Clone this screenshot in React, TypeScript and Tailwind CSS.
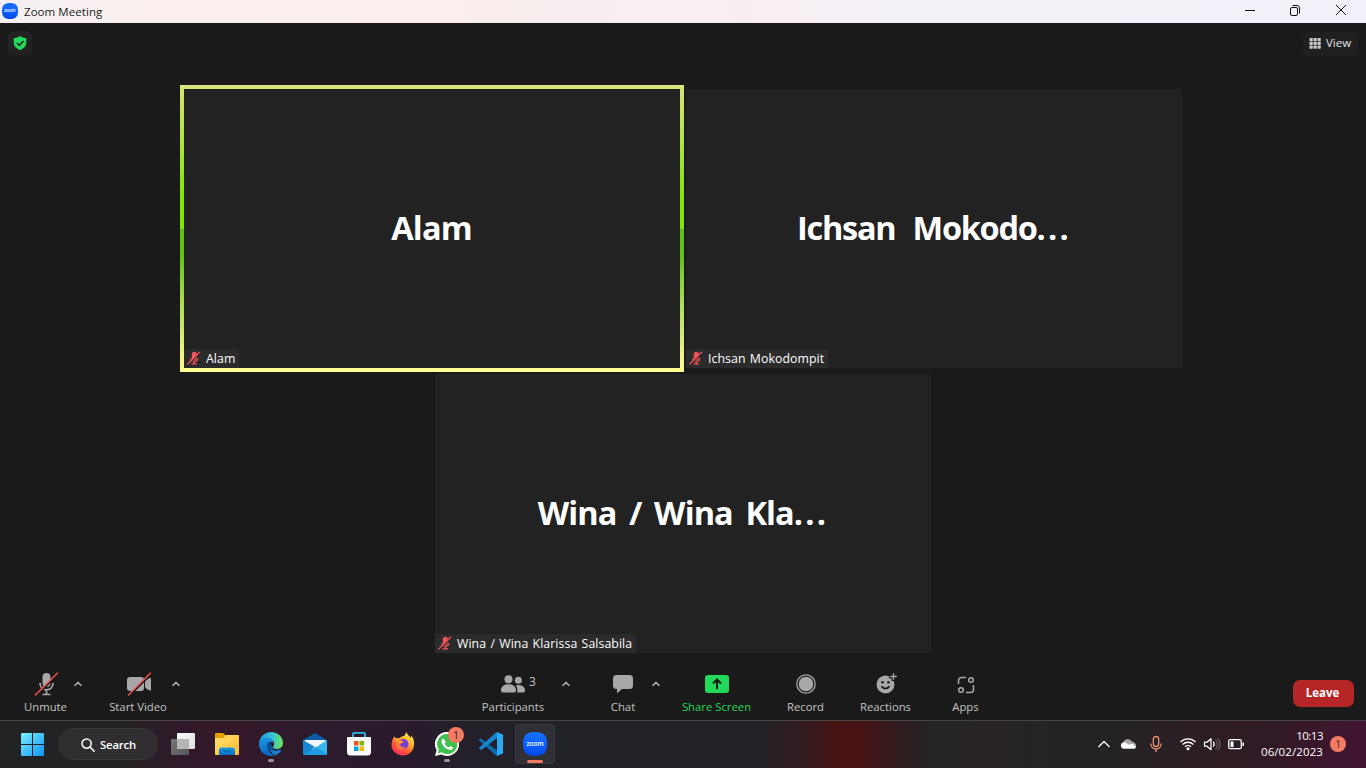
import type { ReactNode } from 'react';

const ui = "font-['Open_Sans','Noto_Sans',sans-serif]";

function ZoomLogo({ size, id }: { size: number; id: string }) {
  return (
    <svg width={size} height={size} viewBox="0 0 24 24" className="block">
      <defs>
        <linearGradient id={id} x1="0" y1="0" x2="0" y2="1">
          <stop offset="0" stopColor="#1673ff" />
          <stop offset="0.6" stopColor="#0b5cff" />
          <stop offset="1" stopColor="#0047e0" />
        </linearGradient>
      </defs>
      <path d="M12 0C20.5 0 24 3.5 24 12s-3.500 12-12 12S0 20.500 0 12 3.500 0 12 0z" fill={`url(#${id})`} />
      <text x="12" y="13.800" textAnchor="middle" fill="#fff" fontFamily="Open Sans" fontWeight="600" fontSize="6.800" textLength="17" lengthAdjust="spacingAndGlyphs">zoom</text>
    </svg>
  );
}

function TitleBar() {
  return (
    <header className="flex h-[23px] items-center bg-[linear-gradient(90deg,#f5eff3_0%,#faf0ee_10%,#fbf0ed_22%,#f9eeee_38%,#f9eef1_52%,#f4f0f8_66%,#f2f1f9_100%)] pb-px pl-0.5">
      <ZoomLogo size={16} id="title-zoom" />
      <span className="ml-1.5 pt-px text-[11.500px] leading-none tracking-[0.060px] text-[#1a1a1a]">Zoom Meeting</span>
      <svg width="112" height="20" viewBox="0 0 112 20" className="ml-auto mr-[14px]" fill="none" stroke="#111" strokeWidth="1">
        <path d="M5 9.500h10" />
        <rect x="50.500" y="6.500" width="7" height="8" rx="1.500" />
        <path d="M52.500 4.500h4.500a2.500 2.500 0 0 1 2.500 2.500v5.500" />
        <path d="M96 4l10 10M106 4L96 14" />
      </svg>
    </header>
  );
}

function MutedMic() {
  return (
    <svg width="14" height="14" viewBox="0 0 14 14" fill="none" className="-mt-px">
      <rect x="4.800" y="0.800" width="5" height="8.500" rx="2.400" fill="#f2545b" />
      <path d="M3.800 7c0 4.500 7 4.500 7 0M7.300 10.500v2.500M4.500 12.800h5.500" stroke="#f2545b" strokeWidth="1.200" />
      <path d="M1.700 13.500L13.500 1.700" stroke="#282828" strokeWidth="1.100" />
      <path d="M0.500 13.300L13 0.800" stroke="#f2545b" strokeWidth="1.300" />
    </svg>
  );
}

function Tile({ title, label, titleClass, labelClass, truncated }: { title: string; label: string; titleClass: string; labelClass: string; truncated?: boolean }) {
  return (
    <div className="flex h-[279px] w-[496px] flex-col bg-[#222222]">
      <div className="flex h-[260px] items-center justify-center pt-[18px]">
        <span className={`whitespace-pre text-[32.500px] font-bold leading-[40px] text-white ${titleClass}`}>
          {title}
          {truncated && <span className="tracking-[2.200px]">...</span>}
        </span>
      </div>
      <div className={`flex h-[19px] items-center bg-[#2b2b2b] pl-[3px] ${labelClass}`}>
        <MutedMic />
        <span className="ml-[5px] whitespace-pre text-[12.300px] leading-[19px] tracking-[0.070px] text-white [word-spacing:1px]">{label}</span>
      </div>
    </div>
  );
}

function Caret() {
  return (
    <svg width="12" height="8" viewBox="0 0 12 8" fill="none" className="mt-[16px] shrink-0">
      <path d="M2.500 5.800L6 2.600l3.500 3.200" stroke="#b5b5b5" strokeWidth="1.500" />
    </svg>
  );
}

function Tool({ label, width, text = 'text-[#c4c4c4]', children }: { label: string; width: string; text?: string; children: ReactNode }) {
  return (
    <button className={`flex h-full shrink-0 flex-col items-center ${width}`}>
      <span className="mt-[7px] flex h-[26px] items-center justify-center">{children}</span>
      <span className={`mt-[1px] whitespace-nowrap text-[11.300px] leading-[18px] font-medium ${text}`}>{label}</span>
    </button>
  );
}

function Toolbar() {
  return (
    <div className="flex h-[56px] pl-[19px]">
      <Tool label="Unmute" width="w-[53px]">
        <svg width="26" height="26" viewBox="0 0 26 26" fill="none">
          <rect x="9.500" y="2" width="8" height="14" rx="4" fill="#a8a8a8" />
          <path d="M7 12c0 9 13 9 13 0M13.500 18.500v5M9.500 23.500h8" stroke="#a8a8a8" strokeWidth="1.700" />
          <path d="M3.500 24.500L26 2" stroke="#1a1a1a" strokeWidth="2" />
          <path d="M2 24.500L24.800 1.700" stroke="#f2524e" strokeWidth="1.500" />
        </svg>
      </Tool>
      <Caret />
      <Tool label="Start Video" width="ml-[22px] w-[64px]">
        <svg width="26" height="26" viewBox="0 0 26 26" fill="none" className="ml-[2px]">
          <rect x="1" y="6" width="17" height="14" rx="3" fill="#a8a8a8" />
          <path d="M19 10.500c1.500-2 3.500-3.500 6-3.500v12.500c-2.500 0-4.500-1.500-6-3.500z" fill="#a8a8a8" />
          <path d="M3.500 24.500L26 2" stroke="#1a1a1a" strokeWidth="2" />
          <path d="M2 24.500L24.800 1.700" stroke="#f2524e" strokeWidth="1.500" />
        </svg>
      </Tool>
      <Caret />
      <Tool label="Participants" width="ml-[284px] w-[94px]">
        <span className="flex items-start pl-[11px]">
          <svg width="24" height="20" viewBox="0 0 24 20" fill="#a8a8a8">
            <circle cx="7.500" cy="5.200" r="4" />
            <circle cx="17.400" cy="6.300" r="3.500" />
            <path d="M0 16c0-7.600 15-7.600 15 0 0 2-1 2.500-2.500 2.500h-10C1 18.500 0 18 0 16z" />
            <path d="M15 11.300c4-1 9 .7 9 4.900 0 1.800-.7 2.300-2 2.300h-6c.8-2.200.3-4.800-1-7.200z" />
          </svg>
          <span className="ml-[4px] text-[12px] leading-[15px] text-[#c4c4c4]">3</span>
        </span>
      </Tool>
      <Caret />
      <Tool label="Chat" width="ml-[24px] w-[54px]">
        <svg width="20" height="20" viewBox="0 0 20 20" fill="#a8a8a8">
          <path d="M3.500 1h13A3.500 3.500 0 0 1 20 4.500v7a3.500 3.500 0 0 1-3.500 3.500H9l-5 4.200V15h-.5A3.500 3.500 0 0 1 0 11.500v-7A3.500 3.500 0 0 1 3.500 1z" />
        </svg>
      </Tool>
      <Caret />
      <Tool label="Share Screen" width="ml-[10px] w-[89px]" text="text-[#23d959]">
        <svg width="24" height="18" viewBox="0 0 24 18" fill="none">
          <rect width="24" height="18" rx="3" fill="#23d959" />
          <path d="M12 14V5M8 8.500l4-4 4 4" stroke="#1a1a1a" strokeWidth="2" />
        </svg>
      </Tool>
      <Tool label="Record" width="w-[89px]">
        <svg width="20" height="20" viewBox="0 0 20 20" fill="none">
          <circle cx="10" cy="10" r="9.200" stroke="#a8a8a8" strokeWidth="1.300" />
          <circle cx="10" cy="10" r="7.300" fill="#a8a8a8" />
        </svg>
      </Tool>
      <Tool label="Reactions" width="w-[71px]">
        <svg width="24" height="24" viewBox="0 0 24 24" fill="none" className="ml-[2px]">
          <circle cx="10.500" cy="12.500" r="9" fill="#a8a8a8" />
          <circle cx="7.500" cy="10.300" r="1.300" fill="#1a1a1a" />
          <circle cx="13.500" cy="10.300" r="1.300" fill="#1a1a1a" />
          <path d="M6.500 14.200c1.500 3 6.500 3 8 0" stroke="#1a1a1a" strokeWidth="1.600" />
          <path d="M18.500 0v9M14 4.500h9" stroke="#1a1a1a" strokeWidth="4" />
          <path d="M18.500 1.200v6.600M15.200 4.500h6.600" stroke="#a8a8a8" strokeWidth="1.300" />
        </svg>
      </Tool>
      <Tool label="Apps" width="w-[89px]">
        <svg width="18" height="18" viewBox="0 0 18 18" fill="none" stroke="#a8a8a8" strokeWidth="1.500" className="mt-[2px]">
          <path d="M1.500 8V4.500a3 3 0 0 1 3-3H9M16.500 9v4.500a3 3 0 0 1-3 3H9" />
          <circle cx="14" cy="4" r="2.300" />
          <circle cx="4" cy="14" r="2.300" />
        </svg>
      </Tool>
      <button className="ml-[283px] mt-[16px] h-[27px] w-[61px] rounded-[7px] bg-[#b72626] pb-px pr-[2px] text-[11.500px] font-bold leading-none text-white">Leave</button>
    </div>
  );
}

function TaskCell({ children, dot }: { children: ReactNode; dot?: boolean }) {
  return (
    <div className="relative flex h-full w-[44px] items-center justify-center">
      {children}
      {dot && <i className="absolute bottom-[5px] left-[19px] h-[3px] w-[6px] rounded-full bg-[#9b9499]" />}
    </div>
  );
}

function Taskbar() {
  return (
    <footer className="flex h-[48px] items-center border-t border-[#444446] bg-[linear-gradient(90deg,#202224_0px,#242224_130px,#30192a_180px,#35192a_240px,#2b1b2b_310px,#2a1a2d_400px,#241f29_460px,#212228_560px,#222327_760px,#341a1e_805px,#4a1313_840px,#451415_865px,#321b1d_895px,#242325_930px,#282226_990px,#212324_1080px,#2a1f24_1180px,#301a25_1270px,#431431_1366px)] pb-px pl-[21px]">
      <svg width="23" height="23" viewBox="0 0 23 23">
        <defs>
          <linearGradient id="win" x1="0" y1="0" x2="1" y2="1">
            <stop offset="0" stopColor="#7af0ff" />
            <stop offset="1" stopColor="#0f94f5" />
          </linearGradient>
        </defs>
        <path d="M1 0h10v11H0V1a1 1 0 0 1 1-1zM12 0h10a1 1 0 0 1 1 1v10H12zM0 12h11v11H1a1 1 0 0 1-1-1zM12 12h11v10a1 1 0 0 1-1 1H12z" fill="url(#win)" />
      </svg>
      <div className="ml-[14px] flex h-8 w-[100px] items-center rounded-full border border-[#3a373b] bg-[#302e31] pl-[22px] pt-px">
        <svg width="14" height="14" viewBox="0 0 15 15" fill="none" stroke="#f4f4f4" strokeWidth="1.700">
          <circle cx="6" cy="6" r="4.900" />
          <path d="M9.700 9.700l4.300 4.300" strokeLinecap="round" />
        </svg>
        <span className="ml-[5px] text-[11.300px] font-semibold leading-none tracking-[-0.150px] text-white">Search</span>
      </div>
      <div className="ml-[3px] flex h-full">
        <TaskCell>
          <svg width="24" height="22" viewBox="0 0 24 22">
            <defs>
              <linearGradient id="tv" x1="0" y1="0" x2="1" y2="1"><stop offset="0" stopColor="#fff" /><stop offset="1" stopColor="#dcdcdc" /></linearGradient>
              <linearGradient id="tvb" x1="0" y1="0" x2="1" y2="1"><stop offset="0" stopColor="#777" /><stop offset="1" stopColor="#555" /></linearGradient>
            </defs>
            <rect y="6" width="18" height="16" rx="1" fill="url(#tvb)" />
            <rect x="6" width="18" height="16" rx="1" fill="url(#tv)" />
            <path d="M6 6h12v10H6z" fill="#b5b5b5" />
          </svg>
        </TaskCell>
        <TaskCell>
          <svg width="24" height="22" viewBox="0 0 24 22">
            <defs>
              <linearGradient id="fo" x1="0" y1="0" x2="1" y2="1"><stop offset="0" stopColor="#ffe07a" /><stop offset="1" stopColor="#fdbd23" /></linearGradient>
              <linearGradient id="fb" x1="0" y1="0" x2="0" y2="1"><stop offset="0" stopColor="#1b9be8" /><stop offset="1" stopColor="#0670c0" /></linearGradient>
            </defs>
            <path d="M0 1.200C0 .5.500 0 1.200 0h7l2 2H23a1 1 0 0 1 1 1v5H0z" fill="#e7a000" />
            <path d="M0 5h8.500l2.500-3h12a1 1 0 0 1 1 1v18a1 1 0 0 1-1 1H1a1 1 0 0 1-1-1z" fill="url(#fo)" />
            <path d="M4 22v-5a2.500 2.500 0 0 1 2.500-2.500h11A2.500 2.500 0 0 1 20 17v5z" fill="url(#fb)" />
            <path d="M8 18h8" stroke="#075a9c" />
          </svg>
        </TaskCell>
        <TaskCell dot>
          <svg width="24" height="24" viewBox="0 0 24 24">
            <defs>
              <linearGradient id="ea" x1="0" y1="0.300" x2="1" y2="0.400"><stop offset="0" stopColor="#2299dc" /><stop offset="0.550" stopColor="#35c4d8" /><stop offset="1" stopColor="#6be05a" /></linearGradient>
              <linearGradient id="eb" x1="0" y1="0" x2="0.300" y2="1"><stop offset="0" stopColor="#1a9be6" /><stop offset="1" stopColor="#0b66c2" /></linearGradient>
            </defs>
            <path d="M0 11.500C.5 5 5.500 0 12 0c7 0 12 5 12 11 0 4-3 6-6.500 6-3 0-4.300-1.300-3-2.900 1.800-2.600.3-6.600-4.500-7.100C5 6.500 1 8.500 0 11.500z" fill="url(#ea)" />
            <path d="M0 12c.5-4 4-6.500 8.500-6.200 3.500.2 6 2.500 6 5.200-3-2.500-6.500 0-6 4 .5 4.500 4 7.500 8 8C8 26.500 0 20 0 12z" fill="url(#eb)" />
            <path d="M9.500 10c-2.500 2.500-1.500 7 2 9.500 3.500 2.300 8 1.500 10.500-1.200.5-.6.200-1.100-.5-.8-4 1.600-8.500.5-8-3.500-2 0-1-4-4-4z" fill="#0c4f96" />
            <path d="M16.500 23c2.500-.8 4.300-2.300 5.500-4.200.3-.6-.1-1-.7-.7-4 1.600-7.500 1.500-10-1 .5 3 2.500 5.500 5.200 5.900z" fill="#1682cf" />
          </svg>
        </TaskCell>
        <TaskCell>
          <svg width="24" height="22" viewBox="0 0 24 22">
            <path d="M0 7L12 0l12 7v2H0z" fill="#0d5aa7" />
            <path d="M1.500 7h21v10h-21z" fill="#f2f5f8" />
            <path d="M0 7l12 7-9.500 8H1a1 1 0 0 1-1-1z" fill="#1688d3" />
            <path d="M24 7v14a1 1 0 0 1-1 1H1z" fill="#35b7ef" />
            <path d="M13 14l11 7a1 1 0 0 1-1 1H1z" fill="#209ce2" />
          </svg>
        </TaskCell>
        <TaskCell>
          <svg width="24" height="24" viewBox="0 0 24 24">
            <path d="M6 7V2.200C6 1.300 6.500.8 7.400.8h9.200c.9 0 1.400.5 1.400 1.400V7" fill="none" stroke="#2bb9ea" strokeWidth="1.800" />
            <path d="M1 5h22a1 1 0 0 1 1 1v14a3.500 3.500 0 0 1-3.500 3.500h-17A3.500 3.500 0 0 1 0 20V6a1 1 0 0 1 1-1z" fill="#fafafa" />
            <path d="M7 9h4.500v4.500H7z" fill="#f15022" /><path d="M12.500 9H17v4.500h-4.500z" fill="#7db900" />
            <path d="M7 14.500h4.500V19H7z" fill="#00a3ee" /><path d="M12.500 14.500H17V19h-4.500z" fill="#ffb800" />
          </svg>
        </TaskCell>
        <TaskCell>
          <svg width="24" height="24" viewBox="0 0 24 24">
            <defs>
              <linearGradient id="ff" x1="0.800" y1="0" x2="0.200" y2="1"><stop offset="0" stopColor="#fff04a" /><stop offset="0.350" stopColor="#ffb52a" /><stop offset="0.650" stopColor="#ff5c36" /><stop offset="1" stopColor="#f52263" /></linearGradient>
            </defs>
            <path d="M3.200 4.200c.5 1 1.200 1.700 2 2.100 1-.4 2.500-.3 3.500 0C10 4.600 11.500 3.900 13 4c1-.9 1.500-2.500 2.500-4 .8 3 3.300 4 4.600 6l.2-2.500C22.500 6 23.500 9.500 23 13c-.5 6-5 10.500-11 10.500S.5 19 .5 13C.5 10 1.500 7 3.200 4.200z" fill="url(#ff)" />
            <circle cx="12.200" cy="12" r="5.300" fill="#7b3fd6" />
            <path d="M7.500 10.500c1.500-1.500 3.500-1.500 5-.6-2 .2-2.500 1.500-3.500 2.200 0 3 3 4.300 6 2.600-2 4-8 3.800-9.500.2-.6-1.500.500-3.500 2-4.400z" fill="#ff7a35" />
            <path d="M3.200 5.500c1 1.500 3 1.600 5.500 1 .5 1.500 2 2.500 4 3.200-1 1.500-3 1.200-4 2.500-2.500-1-5-3-5.500-6.700z" fill="#ff9a2b" />
          </svg>
        </TaskCell>
        <TaskCell dot>
          <svg width="24" height="24" viewBox="0 0 24 24">
            <path d="M12 0a12 12 0 1 1-5.700 22.500L0 24l1.600-6A12 12 0 0 1 12 0z" fill="#fff" />
            <path d="M12.200 2a10 10 0 1 1-5.500 18.300L2.800 21.300l1-3.800A10 10 0 0 1 12.200 2z" fill="#3fbf4f" />
            <path d="M8.500 6.500c-.6-.1-2 .9-2 2.700 0 4 4.900 8.600 8.900 8.600 1.700 0 2.800-1.300 2.700-2.400l-2.700-1.500-1.500 1.500c-2-.6-3.600-2.200-4.300-4l1.300-1.500z" fill="#fff" />
          </svg>
          <span className="absolute left-[23px] top-[6px] flex size-4 items-center justify-center rounded-full bg-[#f47b63] text-[10.500px] leading-none text-[#30201f]">1</span>
        </TaskCell>
        <TaskCell>
          <svg width="24" height="24" viewBox="0 0 24 24">
            <path d="M1.500 6.500L18 20.500V24L.3 8.600a.9.900 0 0 1 0-1.200z" fill="#1477bd" />
            <path d="M0 7.800L1.700 6.300 18 18.600V24h-.3z" fill="#0d6cae" />
            <path d="M18 0v6L2 18.200.3 16.600a.9.900 0 0 1 0-1.200L17.200.2z" fill="#1685ce" />
            <path d="M17.500 0L24 2.600v18.800L17.500 24c.5-.4.500-1 .5-1.600V1.600c0-.6 0-1.200-.5-1.600z" fill="#29a9f2" />
          </svg>
        </TaskCell>
        <TaskCell>
          <div className="relative flex size-10 items-center justify-center rounded-[4px] border border-[#38383e] bg-[#303036]">
            <ZoomLogo size={24} id="task-zoom" />
            <i className="absolute bottom-0 left-[11px] h-[3px] w-4 rounded-full bg-[#f47b63]" />
          </div>
        </TaskCell>
      </div>
      <svg width="152" height="20" viewBox="0 0 152 20" fill="none" className="ml-[538px]">
        <path d="M3.500 13L9 7.500l5.500 5.500" stroke="#fff" strokeWidth="1.300" />
        <path d="M28 9a5 5 0 0 1 9-1.500c2 .2 3.500 2 4 3.500l-9 2z" fill="#a5a5a5" />
        <path d="M28.500 14.700a3.300 3.300 0 0 1-.8-6.200c2.500-.8 4.300 1 6.300 2.300 2.500-1.500 6.500-.8 7 1.700.1 1.500-1 2.200-2.300 2.200z" fill="#fafafa" />
        <g stroke="#e8926f" strokeWidth="1.300">
          <rect x="58.300" y="2.500" width="5.400" height="10" rx="2.700" />
          <path d="M55.800 9.500c0 7.300 10.400 7.300 10.400 0M61 15v3" />
        </g>
        <g stroke="#fff" strokeWidth="1.400">
          <path d="M85.500 8a10.500 10.500 0 0 1 15 0M87.700 10.500a7.500 7.500 0 0 1 10.600 0M90 12.800a4.300 4.300 0 0 1 6 0" />
        </g>
        <circle cx="93" cy="14.800" r="1.500" fill="#fff" />
        <path d="M109.500 8.200h2.500l4-3.500v11l-4-3.500h-2.500z" stroke="#fff" strokeWidth="1.200" strokeLinejoin="round" />
        <path d="M118.200 7.700c1.300 1.500 1.300 3.500 0 5" stroke="#fff" strokeWidth="1.200" />
        <path d="M120.500 5.500c2.500 3 2.500 6.500 0 9.400M122.800 4c3 3.800 3 8.500 0 12.300" stroke="#777" strokeWidth="1" />
        <rect x="133.700" y="5.700" width="12.600" height="9" rx="1.500" stroke="#fff" strokeWidth="1.300" />
        <path d="M135.500 7.500h3v5.500h-3zM147.500 8.500h1.500v3.500h-1.500z" fill="#fff" />
      </svg>
      <div className="flex w-[76px] flex-col items-end text-[11.500px] leading-4 text-white">
        <span className="tracking-[-0.500px]">10:13</span>
        <span className="tracking-[0.100px]">06/02/2023</span>
      </div>
      <span className="ml-[7px] flex size-4 items-center justify-center rounded-full bg-[#f47b63] text-[10px] leading-none text-[#30201f]">1</span>
    </footer>
  );
}

export default function App() {
  return (
    <div className={`flex h-[768px] w-[1366px] flex-col overflow-hidden bg-[#1a1a1a] ${ui}`}>
      <TitleBar />
      <div className="flex h-[62px] items-start justify-between px-2 pt-2">
        <span className="flex size-6 items-center justify-center rounded-[5px] bg-[#222]">
          <svg width="14" height="14" viewBox="0 0 14 14" fill="none">
            <path d="M7 0c2 1.500 4 2 6.300 2v4.500c0 3.800-2.800 6.300-6.300 7.500C3.500 12.800.7 10.300.7 6.500V2C3 2 5 1.500 7 0z" fill="#23d959" />
            <path d="M4 7l2.300 2.300L10.500 5" stroke="#1a1a1a" strokeWidth="1.500" />
          </svg>
        </span>
        <button className="flex h-[26px] w-[55px] items-center rounded-[7px] bg-[#202020] pb-[2px] pl-[6px]">
          <svg width="12" height="11" viewBox="0 0 12 11" fill="#c8c8c8">
            {[0, 3.800, 7.600].map((y) => [0.500, 4.500, 8.500].map((x) => <rect key={`${x}-${y}`} x={x} y={y} width="3.300" height="3.200" rx="0.700" />))}
          </svg>
          <span className="ml-[5px] text-[11.500px] leading-none text-[#e2e2e2]">View</span>
        </button>
      </div>
      <main className="flex h-[579px] flex-col items-center">
        <div className="flex h-[287px] w-[1006px] gap-0.5">
          <div className="h-[287px] w-[504px] bg-[linear-gradient(180deg,#dce67f_0px,#cfe264_15px,#a8e43a_65px,#84e604_110px,#82e600_144px,#5fbe12_144px,#62c315_172px,#8bd238_195px,#c1e468_235px,#f7f58b_275px,#ffff91_287px)] p-1">
            <Tile title="Alam" label="Alam" titleClass="tracking-[-0.800px] pr-px" labelClass="w-[55px]" />
          </div>
          <div className="pt-1">
            <Tile truncated title="Ichsan  Mokodo" label="Ichsan Mokodompit" titleClass="tracking-[-1.300px] [word-spacing:1.500px]" labelClass="w-[142px]" />
          </div>
        </div>
        <div className="mt-[2px]">
          <Tile truncated title="Wina / Wina Kla" label="Wina / Wina Klarissa Salsabila" titleClass="tracking-[-0.900px] [word-spacing:5px]" labelClass="w-[201px]" />
        </div>
      </main>
      <Toolbar />
      <Taskbar />
    </div>
  );
}
